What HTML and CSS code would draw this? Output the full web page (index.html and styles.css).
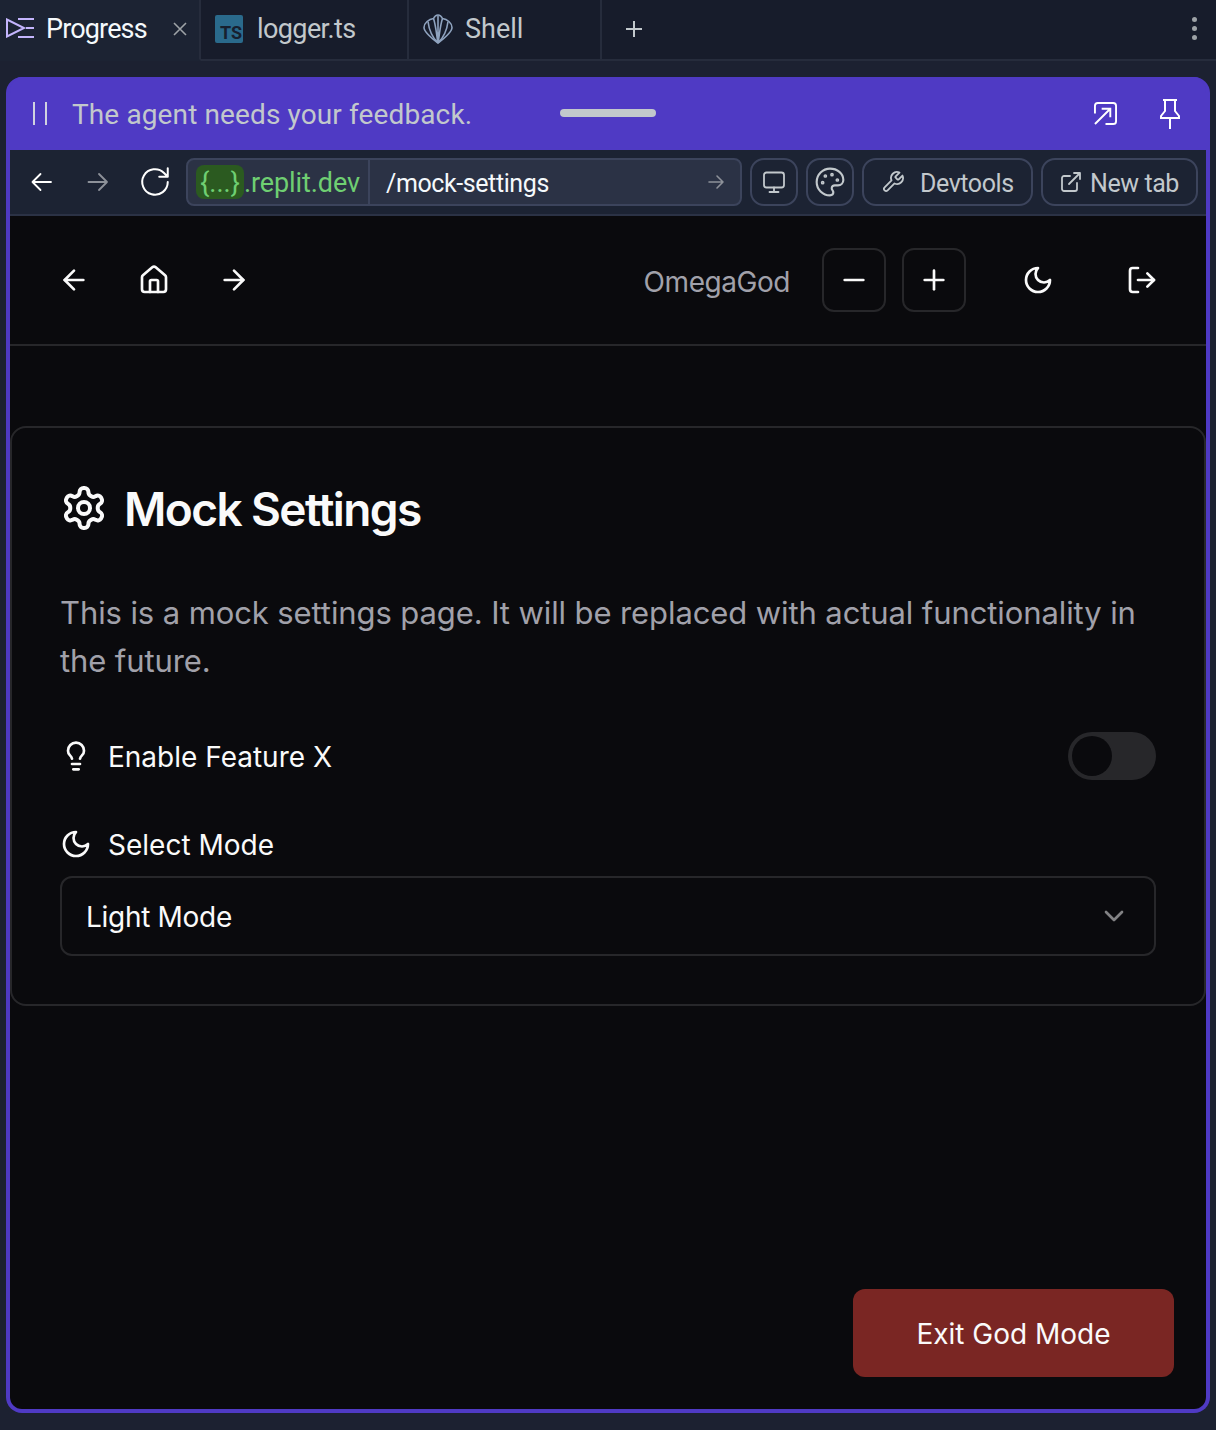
FILE: index.html
```html
<!DOCTYPE html>
<html lang="en">
<head>
<meta charset="utf-8">
<title>Mock Settings</title>
<link rel="stylesheet" href="styles.css">
</head>
<body>
<header class="tabbar">
  <div class="tab tab-active">
    <svg class="tab-icon-progress" viewBox="0 0 29 20" fill="none" stroke="#c4b5fd" stroke-width="2"><path d="M1 1.500v17l17-8.500z"/><path d="M12 1h16M20 10h8M12 19h16"/></svg>
    <span class="tab-label-active">Progress</span>
    <svg class="tab-close" viewBox="0 0 16 16" fill="none" stroke="#9da2a6" stroke-width="1.6"><path d="M2 2l12 12M14 2L2 14"/></svg>
  </div>
  <div class="tab tab-logger">
    <span class="ts-badge">TS</span>
    <span class="tab-label">logger.ts</span>
  </div>
  <div class="tab tab-shell">
    <svg class="shell-icon" viewBox="0 0 30 30" fill="none" stroke="#8fa3bf" stroke-width="1.6" stroke-linejoin="round"><path d="M15 1c2 0 3.500 1.500 4.500 3.500C24 5 29 9 29 13.500c0 5-8 11-14 15.500C9 24.500 1 18.500 1 13.500 1 9 6 5 10.500 4.500 11.500 2.500 13 1 15 1z"/><path d="M15 29c-1.500-8-2-17-4.500-24.500M15 29c1.500-8 2-17 4.500-24.500M15 29C10 24 6 16 5 7.500M15 29c5-5 9-13 10-21.500M15 29V2"/></svg>
    <span class="tab-label">Shell</span>
  </div>
  <div class="tab-add"><svg viewBox="0 0 20 20" fill="none" stroke="#c2c8cc" stroke-width="2"><path d="M10 2v16M2 10h16"/></svg></div>
  <div class="tab-menu"><i class="dot"></i><i class="dot"></i><i class="dot"></i></div>
</header>

<div class="window">
  <div class="banner">
    <i class="pause"></i>
    <span class="banner-text">The agent needs your feedback.</span>
    <i class="handle"></i>
    <div class="banner-actions">
      <svg class="ic-expand" viewBox="0 0 24 24" fill="none" stroke="#fff" stroke-width="2"><path d="M1 12V4a3 3 0 0 1 3-3h16a3 3 0 0 1 3 3v16a3 3 0 0 1-3 3h-8"/><path d="M1 23L17 7M8 7h9v9"/></svg>
      <svg class="ic-pin" viewBox="0 0 20 30" fill="none" stroke="#fff" stroke-width="2"><path d="M3 1h14M5 1v11l-4 5v2h18v-2l-4-5V1M10 19v11"/></svg>
    </div>
  </div>

  <div class="browserbar">
    <svg class="bb-icon" viewBox="0 0 24 24" fill="none" stroke="#fff" stroke-width="1.8" stroke-linecap="round" stroke-linejoin="round"><path d="M21 12H2.500M10.500 4l-8 8 8 8"/></svg>
    <svg class="bb-icon" viewBox="0 0 24 24" fill="none" stroke="#8d9199" stroke-width="1.8" stroke-linecap="round" stroke-linejoin="round"><path d="M2.500 12H21M13 4l8 8-8 8"/></svg>
    <svg class="bb-reload" viewBox="0 0 32 32" fill="none" stroke="#fff" stroke-width="1.900" stroke-linecap="round" stroke-linejoin="round"><path d="M28 16a12 12 0 1 1-3.500-8.500L28 11M28 3v8h-8"/></svg>
    <div class="urlbox">
      <span class="repl-chip">{...}</span><span class="repl-host">.replit.dev</span>
      <span class="url-path">/mock-settings</span>
      <svg class="url-go" viewBox="0 0 18 18" fill="none" stroke="#8d9199" stroke-width="1.600" stroke-linecap="round" stroke-linejoin="round"><path d="M2 9h14M10 3l6 6-6 6"/></svg>
    </div>
    <button class="bb-btn bb-square"><svg class="ic-monitor" viewBox="0 0 24 24" fill="none" stroke="#c2c8cc" stroke-width="1.800" stroke-linecap="round" stroke-linejoin="round"><rect x="2" y="2.500" width="20" height="15" rx="2.500"/><path d="M12 17.500V22M7.500 22h9"/></svg></button>
    <button class="bb-btn bb-square"><svg class="ic-palette" viewBox="0 0 24 24" fill="none" stroke="#c2c8cc" stroke-width="1.600" stroke-linecap="round" stroke-linejoin="round"><path d="M12 2C6.500 2 2 6.500 2 12s4.500 10 10 10c1.500 0 2.500-1 2.500-2.300 0-.6-.3-1.100-.6-1.500-.4-.4-.6-.9-.6-1.500 0-1.300 1-2.200 2.300-2.200H18c2.300 0 4-1.800 4-4C22 5.500 17.500 2 12 2z"/><circle cx="13.500" cy="6.500" r=".6"/><circle cx="17.500" cy="10.500" r=".6"/><circle cx="8.500" cy="7.500" r=".6"/><circle cx="6.500" cy="12.500" r=".6"/></svg></button>
    <button class="bb-btn bb-devtools"><svg class="ic-small" viewBox="0 0 24 24" fill="none" stroke="#c2c8cc" stroke-width="1.800" stroke-linecap="round" stroke-linejoin="round"><path d="M14.700 6.300a1 1 0 0 0 0 1.400l1.600 1.600a1 1 0 0 0 1.400 0l3.770-3.770a6 6 0 0 1-7.940 7.940l-6.910 6.910a2.120 2.120 0 0 1-3-3l6.910-6.910a6 6 0 0 1 7.940-7.940l-3.760 3.760z"/></svg><span>Devtools</span></button>
    <button class="bb-btn bb-newtab"><svg class="ic-small" viewBox="0 0 24 24" fill="none" stroke="#c2c8cc" stroke-width="1.800" stroke-linecap="round" stroke-linejoin="round"><path d="M18 13v6a2 2 0 0 1-2 2H5a2 2 0 0 1-2-2V8a2 2 0 0 1 2-2h6M15 3h6v6M10 14L21 3"/></svg><span>New tab</span></button>
  </div>

  <div class="app">
    <nav class="appnav">
      <div class="nav-group">
        <button class="navbtn"><svg class="lucide32" viewBox="0 0 24 24"><path d="m12 19-7-7 7-7"/><path d="M19 12H5"/></svg></button>
        <button class="navbtn"><svg class="lucide32" viewBox="0 0 24 24"><path d="M15 21v-8a1 1 0 0 0-1-1h-4a1 1 0 0 0-1 1v8"/><path d="M3 10a2 2 0 0 1 .709-1.528l7-5.999a2 2 0 0 1 2.582 0l7 5.999A2 2 0 0 1 21 10v9a2 2 0 0 1-2 2H5a2 2 0 0 1-2-2z"/></svg></button>
        <button class="navbtn"><svg class="lucide32" viewBox="0 0 24 24"><path d="M5 12h14"/><path d="m12 5 7 7-7 7"/></svg></button>
      </div>
      <div class="nav-right">
        <span class="username">OmegaGod</span>
        <div class="zoom-group">
          <button class="navbtn navbtn-outline"><svg class="lucide32" viewBox="0 0 24 24"><path d="M5 12h14"/></svg></button>
          <button class="navbtn navbtn-outline"><svg class="lucide32" viewBox="0 0 24 24"><path d="M5 12h14"/><path d="M12 5v14"/></svg></button>
        </div>
        <button class="navbtn"><svg class="lucide32" viewBox="0 0 24 24"><path d="M12 3a6 6 0 0 0 9 9 9 9 0 1 1-9-9Z"/></svg></button>
        <button class="navbtn"><svg class="lucide32" viewBox="0 0 24 24"><path d="M9 21H5a2 2 0 0 1-2-2V5a2 2 0 0 1 2-2h4"/><path d="m16 17 5-5-5-5"/><path d="M21 12H9"/></svg></button>
      </div>
    </nav>

    <main class="main">
      <section class="card">
        <h1 class="card-title">
          <svg class="lucide48" viewBox="0 0 24 24"><path d="M12.220 2h-.44a2 2 0 0 0-2 2v.18a2 2 0 0 1-1 1.730l-.43.25a2 2 0 0 1-2 0l-.15-.08a2 2 0 0 0-2.730.73l-.22.38a2 2 0 0 0 .73 2.730l.15.1a2 2 0 0 1 1 1.720v.51a2 2 0 0 1-1 1.740l-.15.09a2 2 0 0 0-.73 2.730l.22.38a2 2 0 0 0 2.730.73l.15-.08a2 2 0 0 1 2 0l.43.25a2 2 0 0 1 1 1.730V20a2 2 0 0 0 2 2h.44a2 2 0 0 0 2-2v-.18a2 2 0 0 1 1-1.730l.43-.25a2 2 0 0 1 2 0l.15.08a2 2 0 0 0 2.730-.73l.22-.39a2 2 0 0 0-.73-2.730l-.15-.08a2 2 0 0 1-1-1.740v-.5a2 2 0 0 1 1-1.740l.15-.09a2 2 0 0 0 .73-2.730l-.22-.38a2 2 0 0 0-2.730-.73l-.15.08a2 2 0 0 1-2 0l-.43-.25a2 2 0 0 1-1-1.730V4a2 2 0 0 0-2-2z"/><circle cx="12" cy="12" r="3"/></svg>
          <span class="card-title-text">Mock Settings</span>
        </h1>
        <p class="card-desc">This is a mock settings page. It will be replaced with actual functionality in the future.</p>
        <div class="setting-row">
          <label class="setting-label"><svg class="lucide32" viewBox="0 0 24 24"><path d="M15 14c.2-1 .7-1.700 1.500-2.500 1-.9 1.500-2.200 1.500-3.500A6 6 0 0 0 6 8c0 1 .2 2.200 1.500 3.500.7.7 1.300 1.500 1.500 2.500"/><path d="M9 18h6"/><path d="M10 22h4"/></svg><span class="label-text">Enable Feature X</span></label>
          <div class="switch"><i class="switch-thumb"></i></div>
        </div>
        <div class="setting-field">
          <label class="setting-label"><svg class="lucide32" viewBox="0 0 24 24"><path d="M12 3a6 6 0 0 0 9 9 9 9 0 1 1-9-9Z"/></svg><span class="label-text">Select Mode</span></label>
          <div class="select"><span class="select-value">Light Mode</span><svg class="lucide32 chevron" viewBox="0 0 24 24"><path d="m6 9 6 6 6-6"/></svg></div>
        </div>
      </section>
    </main>
    <button class="exit-btn"><span class="exit-text">Exit God Mode</span></button>
  </div>
</div>
</body>
</html>
```
FILE: styles.css
```css
* { box-sizing: border-box; }
html, body { margin: 0; padding: 0; }
body { width: 1216px; height: 1430px; background: #1c2131; overflow: hidden; font-family: Inter, "Liberation Sans", sans-serif; color: #fafafa; }
button { font: inherit; color: inherit; background: none; border: 0; padding: 0; }
svg { display: block; flex: none; }

.tabbar { height: 61px; display: flex; align-items: stretch; background: #171c2b; font-family: Roboto, sans-serif; font-size: 27px; letter-spacing: -.6px; position: relative; }
.tab { display: flex; align-items: center; height: 61px; padding-bottom: 2px; border-bottom: 2px solid #262c3c; border-right: 2px solid #262c3c; }
.tab-active { width: 201px; background: #1c2333; border-bottom-color: #1c2333; padding-left: 6px; }
.tab-logger { width: 208px; padding-left: 14px; }
.tab-shell { width: 193px; padding-left: 14px; }
.tab-icon-progress { width: 29px; height: 20px; margin-bottom: 1px; }
.tab-label-active { color: #f5f9fc; margin-left: 11px; width: 101px; letter-spacing: -.85px; }
.tab-close { width: 16px; height: 16px; margin-left: 25px; }
.ts-badge { width: 28px; height: 28px; background: #2a6a8c; border-radius: 2px; color: #17202f; font-size: 18px; font-weight: 700; letter-spacing: 0; display: flex; align-items: flex-end; justify-content: flex-end; line-height: 20px; padding-right: 1px; }
.tab-label { color: #c2c8cc; margin-left: 14px; }
.shell-icon { width: 30px; height: 30px; }
.tab-shell .tab-label { margin-left: 12px; letter-spacing: 0; }
.tab-add { flex: 1; display: flex; align-items: center; padding: 0 0 2px 22px; border-bottom: 2px solid #262c3c; }
.tab-add svg { width: 20px; height: 20px; }
.tab-menu { position: absolute; right: 19px; top: 17px; display: flex; flex-direction: column; gap: 4px; }
.dot { width: 5px; height: 5px; border-radius: 50%; background: #9da2a6; }

.window { margin: 16px 6px 0; height: 1336px; border: 4px solid #4f3ac4; border-top: 0; border-radius: 16px; background: #4f3ac4; display: flex; flex-direction: column; overflow: hidden; }
.banner { height: 73px; flex: none; display: flex; align-items: center; background: #4f3ac4; font-family: Roboto, sans-serif; font-size: 28px; letter-spacing: .12px; position: relative; }
.pause { width: 14px; height: 23px; margin-left: 23px; border-left: 2px solid #d0d2e0; border-right: 2px solid #d0d2e0; }
.banner-text { margin-left: 25px; padding-top: 2px; color: #c2c8cc; }
.handle { position: absolute; left: 550px; top: 32px; width: 96px; height: 8px; border-radius: 4px; background: #c2c8cc; }
.banner-actions { margin-left: auto; display: flex; align-items: center; gap: 43px; padding-right: 26px; }
.ic-expand { width: 23px; height: 23px; }
.ic-pin { width: 20px; height: 30px; }

.browserbar { height: 66px; flex: none; display: flex; align-items: center; background: #1c2333; border-bottom: 2px solid #2b3245; padding: 0 8px 0 20px; font-family: Roboto, sans-serif; font-size: 25px; letter-spacing: -.4px; }
.bb-icon { width: 24px; height: 24px; margin-right: 32px; }
.bb-reload { width: 34px; height: 34px; margin: 0 14px 0 -4px; }
.urlbox { width: 556px; height: 48px; display: flex; align-items: center; background: #2b3245; border: 2px solid #3c445c; border-radius: 8px; padding-left: 8px; margin-right: 8px; }
.repl-chip { height: 34px; width: 48px; background: #2b5a20; border-radius: 8px; color: #6fcf72; font-size: 27px; letter-spacing: 0; display: flex; align-items: center; justify-content: center; padding-top: 2px; }
.repl-host { color: #6fcf72; width: 126px; height: 44px; line-height: 46px; font-size: 27px; letter-spacing: -.1px; border-right: 2px solid #3c445c; }
.url-path { color: #f5f9fc; margin-left: 16px; padding-top: 2px; }
.url-go { width: 18px; height: 18px; margin-left: auto; margin-right: 15px; }
.bb-btn { height: 48px; display: flex; align-items: center; border: 2px solid #3c445c; border-radius: 14px; color: #c2c8cc; margin-right: 8px; letter-spacing: -.42px; }
.bb-btn span { padding-top: 2px; }
.bb-square { width: 48px; justify-content: center; }
.ic-monitor { width: 24px; height: 24px; }
.ic-palette { width: 32px; height: 32px; }
.ic-small { width: 24px; height: 24px; }
.bb-devtools { width: 171px; padding-left: 17px; gap: 15px; }
.bb-newtab { width: 157px; padding-left: 16px; gap: 7px; margin-right: 0; }

.app { flex: 1; background: #0a0a0d; position: relative; display: flex; flex-direction: column; min-height: 0; }
.appnav { height: 130px; flex: none; display: flex; align-items: center; justify-content: space-between; padding: 0 32px; border-bottom: 2px solid #27272a; }
.nav-group { display: flex; gap: 16px; }
.nav-right { display: flex; align-items: center; gap: 40px; }
.username { font-size: 28px; letter-spacing: -.45px; color: #a1a1aa; margin-right: -8px; padding-top: 3px; }
.zoom-group { display: flex; gap: 16px; }
.navbtn { width: 64px; height: 64px; display: flex; align-items: center; justify-content: center; border-radius: 12px; }
.navbtn-outline { border: 2px solid #27272a; }
.lucide32, .lucide48 { fill: none; stroke: #fafafa; stroke-width: 2; stroke-linecap: round; stroke-linejoin: round; }
.lucide32 { width: 32px; height: 32px; }
.lucide48 { width: 48px; height: 48px; }

.main { padding: 80px 0 0; }
.card { border: 2px solid #27272a; border-radius: 16px; padding: 48px; }
.card-title { margin: 0 0 48px; display: flex; align-items: center; gap: 16px; height: 64px; font-size: 46px; font-weight: 600; letter-spacing: -1.6px; line-height: 64px; }
.card-title-text { padding-top: 2px; }
.card-desc { margin: 0 0 47px; padding-top: 1px; font-size: 31px; letter-spacing: -.1px; line-height: 48px; color: #a1a1aa; }
.setting-row { display: flex; align-items: center; justify-content: space-between; height: 48px; margin-bottom: 48px; }
.setting-label { display: flex; align-items: center; gap: 16px; height: 32px; font-size: 28px; font-weight: 400; line-height: 32px; }
.label-text { padding-top: 2px; letter-spacing: 0; }
.switch { width: 88px; height: 48px; border-radius: 24px; background: #27272a; padding: 4px; }
.switch-thumb { display: block; width: 40px; height: 40px; border-radius: 50%; background: #0a0a0d; }
.setting-field { display: flex; flex-direction: column; gap: 16px; }
.select { height: 80px; border: 2px solid #27272a; border-radius: 12px; display: flex; align-items: center; justify-content: space-between; padding: 0 24px; font-size: 28px; }
.select-value { padding-top: 2px; letter-spacing: -.3px; }
.chevron { opacity: .5; }
.exit-btn { position: absolute; right: 32px; bottom: 32px; width: 321px; height: 88px; border-radius: 12px; background: #7a2623; color: #fafafa; font-size: 28px; font-weight: 400; }
.exit-text { display: block; padding-top: 2px; }
```
